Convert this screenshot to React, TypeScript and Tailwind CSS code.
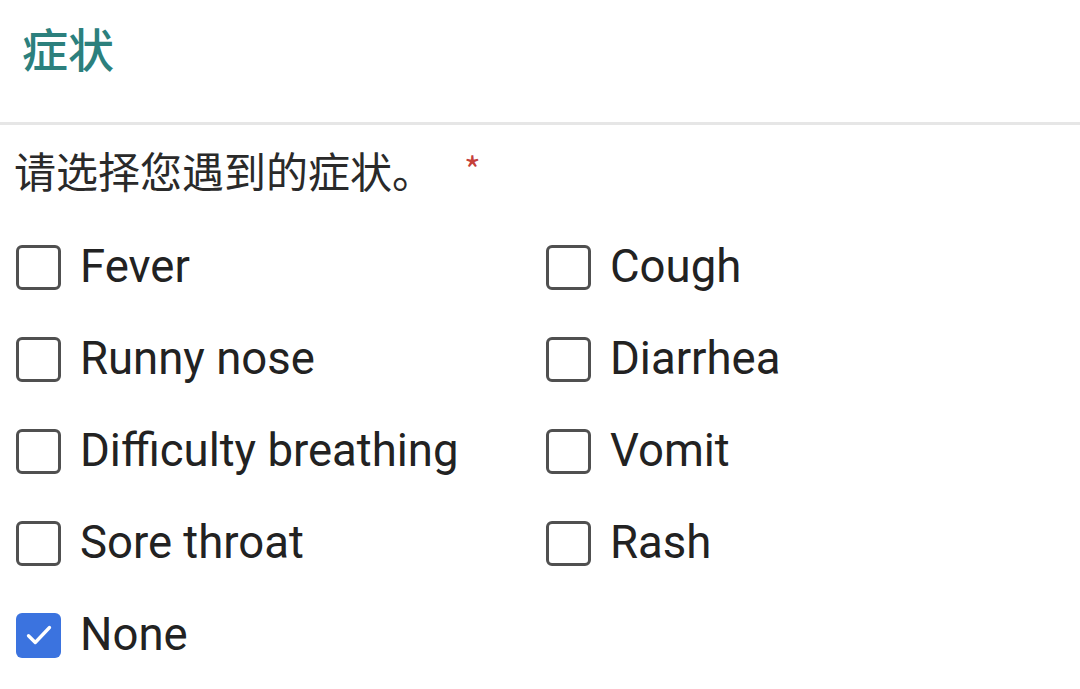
import React, { useState } from 'react'

const symptoms = [
  'Fever',
  'Cough',
  'Runny nose',
  'Diarrhea',
  'Difficulty breathing',
  'Vomit',
  'Sore throat',
  'Rash',
  'None',
]

function CheckRow({ label, checked, onToggle }: { label: string; checked: boolean; onToggle: () => void }) {
  return (
    <button onClick={onToggle} className="flex h-[92px] items-center text-left">
      <span
        className={`flex h-[45px] w-[45px] shrink-0 items-center justify-center rounded-[6px] ${
          checked ? 'bg-[#3b73df]' : 'border-[3px] border-[#505050] bg-white'
        }`}
      >
        {checked && (
          <svg width="36" height="36" viewBox="0 0 24 24" fill="none">
            <path d="M5 12.5l4.5 4.5L19 7" stroke="white" strokeWidth="2.2" strokeLinecap="round" strokeLinejoin="round" />
          </svg>
        )}
      </span>
      <span className="ml-[19px] text-[45.5px] leading-none text-[#222]">{label}</span>
    </button>
  )
}

export default function App() {
  const [checked, setChecked] = useState<string[]>(['None'])

  const toggle = (s: string) =>
    setChecked(checked.includes(s) ? checked.filter(c => c !== s) : [...checked, s])

  return (
    <div className="h-[689px] w-[1080px] overflow-hidden bg-white font-['Roboto','Noto_Sans_CJK_SC',sans-serif]">
      {/* 标题 */}
      <div className="px-[22px] pt-[24px] pb-[52px]">
        <h1 className="font-['Noto_Sans_CJK_SC',sans-serif] text-[46px] leading-none font-medium text-[#2c807d]">症状</h1>
      </div>
      <div className="h-[3px] bg-[#e6e6e6]" />

      {/* 问题 */}
      <div className="px-[14px] pt-[24px]">
        <p className="font-['Noto_Sans_CJK_SC',sans-serif] text-[42px] leading-none text-[#2a2a2a]">
          请选择您遇到的症状。<span className="relative top-[-4px] ml-[30px] text-[36px] text-[#c5403a]">*</span>
        </p>
        <div className="mt-[30px] grid grid-cols-[530px_1fr] pl-[2px]">
          {symptoms.map(s => (
            <CheckRow key={s} label={s} checked={checked.includes(s)} onToggle={() => toggle(s)} />
          ))}
        </div>
      </div>
    </div>
  )
}
